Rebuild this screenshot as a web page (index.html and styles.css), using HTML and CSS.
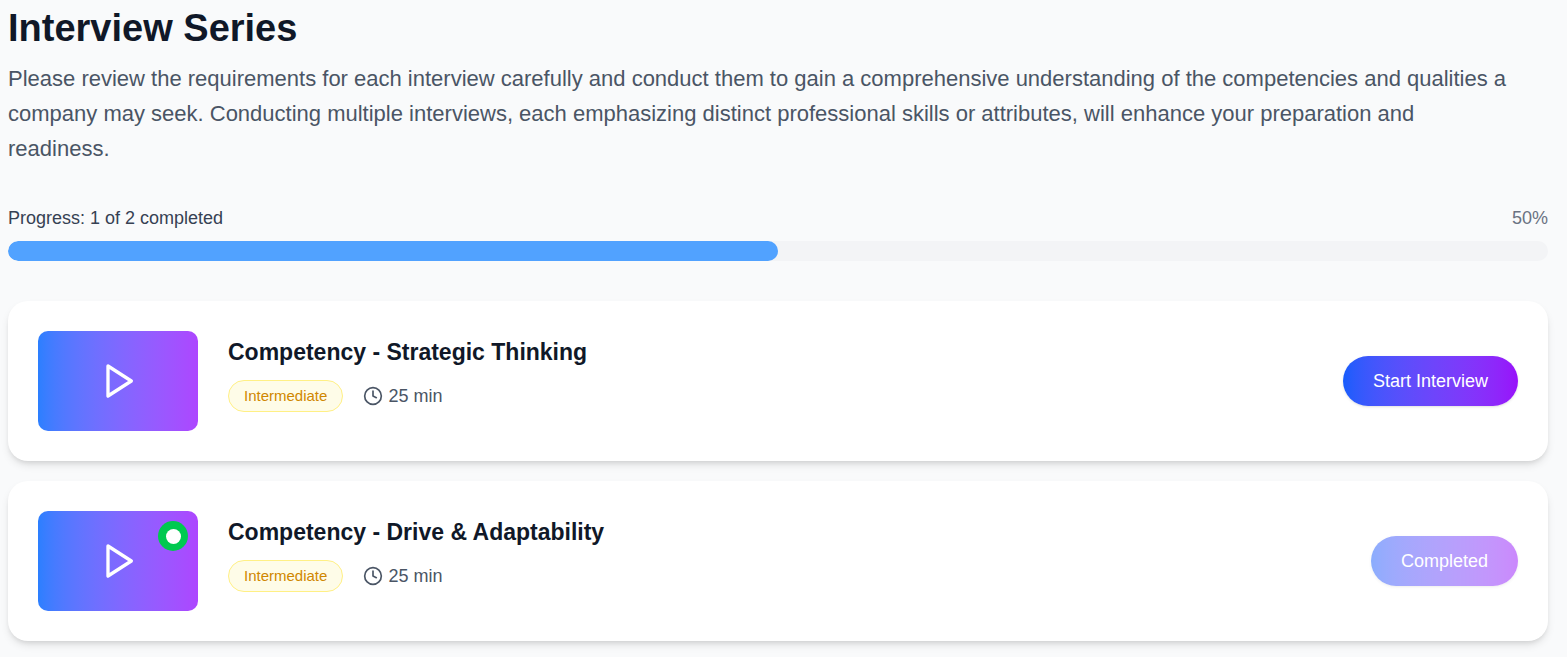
FILE: index.html
```html
<!DOCTYPE html>
<html lang="en">
<head>
<meta charset="utf-8">
<title>Interview Series</title>
<link rel="stylesheet" href="styles.css">
</head>
<body>
<main class="page">
  <header class="intro">
    <h1 class="title">Interview Series</h1>
    <p class="lead">Please review the requirements for each interview carefully and conduct them to gain a comprehensive understanding of the competencies and qualities a company may seek. Conducting multiple interviews, each emphasizing distinct professional skills or attributes, will enhance your preparation and readiness.</p>
  </header>
  <section class="progress">
    <div class="progress-labels">
      <span class="progress-text">Progress: 1 of 2 completed</span>
      <span class="progress-percent">50%</span>
    </div>
    <div class="track"><div class="bar" style="width: 50%"></div></div>
  </section>
  <section class="list">
    <article class="card">
      <div class="thumb">
        <svg class="play" viewBox="0 0 24 24"><polygon points="6 3 20 12 6 21 6 3"/></svg>
      </div>
      <div class="info">
        <h2 class="name">Competency - Strategic Thinking</h2>
        <div class="meta">
          <span class="level">Intermediate</span>
          <span class="time"><svg class="clock" viewBox="0 0 24 24"><circle cx="12" cy="12" r="10"/><polyline points="12 6 12 12 16 14"/></svg>25 min</span>
        </div>
      </div>
      <button class="action" type="button">Start Interview</button>
    </article>
    <article class="card">
      <div class="thumb">
        <svg class="play" viewBox="0 0 24 24"><polygon points="6 3 20 12 6 21 6 3"/></svg>
        <svg class="done" viewBox="0 0 60 60"><circle cx="30" cy="30" r="30" fill="#00c950"/><circle cx="31" cy="31" r="15" fill="#fff"/></svg>
      </div>
      <div class="info">
        <h2 class="name">Competency - Drive &amp; Adaptability</h2>
        <div class="meta">
          <span class="level">Intermediate</span>
          <span class="time"><svg class="clock" viewBox="0 0 24 24"><circle cx="12" cy="12" r="10"/><polyline points="12 6 12 12 16 14"/></svg>25 min</span>
        </div>
      </div>
      <button class="action" type="button" disabled>Completed</button>
    </article>
  </section>
</main>
</body>
</html>
```

FILE: styles.css
```css
* {
  box-sizing: border-box;
}

body {
  margin: 0;
  background: #f9fafb;
  color: #101828;
  font-family: "Liberation Sans", Arial, sans-serif;
}

.page {
  padding: 6px 19px 16px 8px;
}

.title {
  margin: 0 0 10px;
  font-size: 38px;
  line-height: 45px;
}

.lead {
  margin: 0;
  padding-right: 32px;
  color: #4a5565;
  font-size: 22px;
  line-height: 35px;
}

.progress {
  margin-top: 39px;
}

.progress-labels {
  display: flex;
  justify-content: space-between;
  margin-bottom: 10px;
  font-size: 18px;
  line-height: 26px;
}

.progress-text {
  color: #364153;
}

.progress-percent {
  color: #6a7282;
}

.track {
  height: 20px;
  overflow: hidden;
  border-radius: 10px;
  background: #f3f4f6;
}

.bar {
  height: 100%;
  border-radius: 10px;
  background: #51a2ff;
}

.list {
  display: grid;
  gap: 20px;
  margin-top: 40px;
}

.card {
  display: flex;
  align-items: center;
  gap: 30px;
  padding: 30px;
  border-radius: 20px;
  background: #fff;
  box-shadow: 0 5px 8px -1px rgb(0 0 0 / 10%), 0 3px 5px -2px rgb(0 0 0 / 10%);
}

.thumb {
  position: relative;
  display: flex;
  flex: none;
  align-items: center;
  justify-content: center;
  width: 160px;
  height: 100px;
  border-radius: 10px;
  background: linear-gradient(to right in oklab, #2b7fff, #ad46ff);
}

.play {
  width: 40px;
  height: 40px;
  fill: none;
  stroke: #fff;
  stroke-width: 2;
  stroke-linecap: round;
  stroke-linejoin: round;
}

.done {
  position: absolute;
  top: 10px;
  right: 10px;
  width: 30px;
  height: 30px;
}

.info {
  flex: 1;
  min-width: 0;
  align-self: flex-start;
  padding-top: 4px;
}

.name {
  margin: 0 0 10px;
  font-size: 23px;
  line-height: 35px;
}

.meta {
  display: flex;
  align-items: center;
  gap: 20px;
}

.level {
  padding: 4px 15px;
  border: 1px solid #fff085;
  border-radius: 16px;
  background: #fefce8;
  color: #d08700;
  font-size: 15px;
  line-height: 22px;
}

.time {
  display: flex;
  align-items: center;
  gap: 5px;
  color: #4a5565;
  font-size: 18px;
  line-height: 26px;
}

.clock {
  width: 20px;
  height: 20px;
  fill: none;
  stroke: currentColor;
  stroke-width: 2;
  stroke-linecap: round;
  stroke-linejoin: round;
}

.action {
  padding: 12px 30px;
  border: 0;
  border-radius: 25px;
  background: linear-gradient(to right in oklab, #155dfc, #9810fa);
  box-shadow: 0 1px 3px rgb(0 0 0 / 10%), 0 1px 2px -1px rgb(0 0 0 / 10%);
  color: #fff;
  font: 18px/26px "Liberation Sans", Arial, sans-serif;
}

.action:disabled {
  opacity: 0.5;
}
```
